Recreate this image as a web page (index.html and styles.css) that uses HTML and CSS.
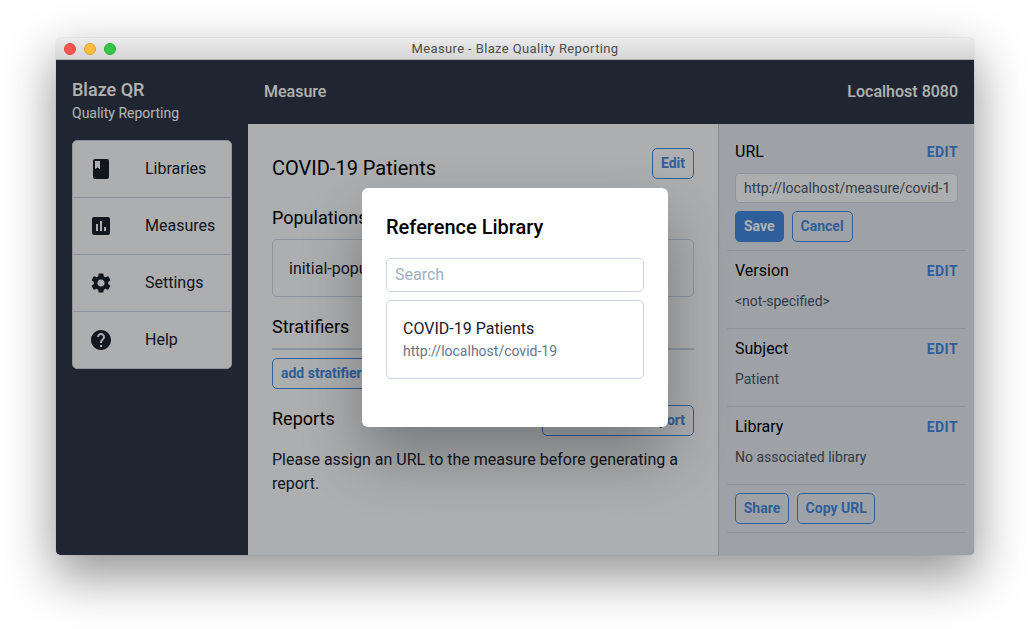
FILE: index.html
```html
<!DOCTYPE html>
<html lang="en">
<head>
<meta charset="utf-8">
<title>Measure - Blaze Quality Reporting</title>
<link rel="stylesheet" href="styles.css">
</head>
<body>
<div class="window">
  <div class="titlebar">
    <div class="lights"><span class="light red"></span><span class="light yellow"></span><span class="light green"></span></div>
    <div class="wintitle">Measure - Blaze Quality Reporting</div>
  </div>
  <div class="content">
    <nav class="sidebar">
      <div class="brand">
        <div class="brand-name">Blaze QR</div>
        <div class="brand-sub">Quality Reporting</div>
      </div>
      <ul class="menu">
        <li class="menu-item">
          <svg class="menu-icon" viewBox="0 0 24 24"><path d="M18 2H6c-1.1 0-2 .9-2 2v16c0 1.1.9 2 2 2h12c1.1 0 2-.9 2-2V4c0-1.1-.9-2-2-2zM6 4h5v8l-2.5-1.5L6 12V4z"/></svg>
          <span class="menu-label">Libraries</span>
        </li>
        <li class="menu-item">
          <svg class="menu-icon" viewBox="0 0 24 24"><path d="M19 3H5c-1.1 0-2 .9-2 2v14c0 1.1.9 2 2 2h14c1.1 0 2-.9 2-2V5c0-1.1-.9-2-2-2zM9 17H7v-7h2v7zm4 0h-2V7h2v10zm4 0h-2v-4h2v4z"/></svg>
          <span class="menu-label">Measures</span>
        </li>
        <li class="menu-item">
          <svg class="menu-icon" viewBox="0 0 24 24"><path d="M19.14 12.94c.04-.3.06-.61.06-.94 0-.32-.02-.64-.07-.94l2.03-1.58c.18-.14.23-.41.12-.61l-1.92-3.32c-.12-.22-.37-.29-.59-.22l-2.39.96c-.5-.38-1.03-.7-1.62-.94l-.36-2.54c-.04-.24-.24-.41-.48-.41h-3.84c-.24 0-.43.17-.47.41l-.36 2.54c-.59.24-1.13.57-1.62.94l-2.39-.96c-.22-.08-.47 0-.59.22L2.74 8.87c-.12.21-.08.47.12.61l2.03 1.58c-.05.3-.09.63-.09.94s.02.64.07.94l-2.03 1.58c-.18.14-.23.41-.12.61l1.92 3.32c.12.22.37.29.59.22l2.39-.96c.5.38 1.03.7 1.62.94l.36 2.54c.05.24.24.41.48.41h3.84c.24 0 .44-.17.47-.41l.36-2.54c.59-.24 1.13-.56 1.62-.94l2.39.96c.22.08.47 0 .59-.22l1.92-3.32c.12-.22.07-.47-.12-.61l-2.01-1.58zM12 15.6c-1.98 0-3.6-1.62-3.6-3.6s1.62-3.6 3.6-3.6 3.6 1.62 3.6 3.6-1.62 3.6-3.6 3.6z"/></svg>
          <span class="menu-label">Settings</span>
        </li>
        <li class="menu-item">
          <svg class="menu-icon" viewBox="0 0 24 24"><path d="M12 2C6.48 2 2 6.48 2 12s4.48 10 10 10 10-4.48 10-10S17.52 2 12 2zm1 17h-2v-2h2v2zm2.07-7.75l-.9.92C13.45 12.9 13 13.5 13 15h-2v-.5c0-1.1.45-2.1 1.17-2.83l1.24-1.26c.37-.36.59-.86.59-1.41 0-1.1-.9-2-2-2s-2 .9-2 2H8c0-2.21 1.79-4 4-4s4 1.79 4 4c0 .88-.36 1.68-.93 2.25z"/></svg>
          <span class="menu-label">Help</span>
        </li>
      </ul>
    </nav>
    <div class="page">
      <header class="topbar">
        <span>Measure</span>
        <span>Localhost 8080</span>
      </header>
      <div class="columns">
        <main class="main">
          <div class="title-row">
            <h1 class="title">COVID-19 Patients</h1>
            <button class="btn">Edit</button>
          </div>
          <h2 class="heading populations">Populations</h2>
          <div class="pop-box">initial-population</div>
          <h2 class="heading stratifiers">Stratifiers</h2>
          <button class="btn add">add stratifier</button>
          <div class="reports-row">
            <h2 class="heading">Reports</h2>
            <button class="btn generate">Generate new report</button>
          </div>
          <p class="note">Please assign an URL to the measure before generating a report.</p>
        </main>
        <aside class="aside">
          <section class="prop prop-url">
            <div class="prop-head"><span class="prop-label">URL</span><span class="edit">EDIT</span></div>
            <div class="url-input">http://localhost/measure/covid-1</div>
            <div class="btn-row"><button class="btn solid">Save</button><button class="btn">Cancel</button></div>
          </section>
          <section class="prop">
            <div class="prop-head"><span class="prop-label">Version</span><span class="edit">EDIT</span></div>
            <div class="prop-value">&lt;not-specified&gt;</div>
          </section>
          <section class="prop">
            <div class="prop-head"><span class="prop-label">Subject</span><span class="edit">EDIT</span></div>
            <div class="prop-value">Patient</div>
          </section>
          <section class="prop">
            <div class="prop-head"><span class="prop-label">Library</span><span class="edit">EDIT</span></div>
            <div class="prop-value">No associated library</div>
          </section>
          <section class="prop prop-actions">
            <div class="btn-row"><button class="btn">Share</button><button class="btn">Copy URL</button></div>
          </section>
        </aside>
      </div>
    </div>
    <div class="overlay">
      <div class="modal">
        <h3 class="modal-title">Reference Library</h3>
        <div class="search">Search</div>
        <div class="result">
          <div class="result-title">COVID-19 Patients</div>
          <div class="result-url">http://localhost/covid-19</div>
        </div>
      </div>
    </div>
  </div>
</div>
</body>
</html>
```

FILE: styles.css
```css
* { box-sizing: border-box; }
html, body { margin: 0; padding: 0; height: 100%; background: #fff; overflow: hidden; }
body { padding: 38px 0 0 56px; font-family: Roboto, "Liberation Sans", sans-serif; font-size: 16px; color: #000; }

.window {
  width: 918px;
  height: 517px;
  display: flex;
  flex-direction: column;
  border-radius: 5px;
  box-shadow: 0 20px 50px 2px rgba(0, 0, 0, .42), 0 0 1px rgba(0, 0, 0, .35);
}

.titlebar {
  height: 22px;
  flex: none;
  display: flex;
  align-items: center;
  justify-content: center;
  position: relative;
  background: linear-gradient(#ebebeb, #d5d5d5);
  border-bottom: 1px solid #b4b4b4;
  border-radius: 5px 5px 0 0;
}
.lights { position: absolute; left: 8px; top: 5px; display: flex; gap: 8px; }
.light { width: 12px; height: 12px; border-radius: 50%; }
.red { background: #fc5753; border: 1px solid #e0443e; }
.yellow { background: #fdbc40; border: 1px solid #dfa123; }
.green { background: #33c748; border: 1px solid #27aa35; }
.wintitle { font-size: 13px; letter-spacing: .38px; color: #4c4c4c; }

.content {
  flex: 1;
  min-height: 0;
  display: flex;
  position: relative;
  overflow: hidden;
  border-radius: 0 0 5px 5px;
  background: #2d3748;
}

.sidebar { width: 192px; flex: none; padding: 0 16px; background: #2d3748; }
.brand { height: 80px; padding-top: 18px; color: #fff; }
.brand-name { font-size: 18px; font-weight: 500; line-height: 24px; }
.brand-sub { font-size: 14px; line-height: 22px; }

.menu {
  list-style: none;
  margin: 0;
  padding: 0;
  background: #f7fafc;
  border: 1px solid #cbd5e0;
  border-radius: 5px;
}
.menu-item {
  height: 57px;
  display: flex;
  align-items: center;
  padding-left: 16px;
  gap: 32px;
  color: #1a202c;
  border-bottom: 1px solid #cbd5e0;
}
.menu-item:last-child { border-bottom: 0; height: 56px; }
.menu-icon { width: 24px; height: 24px; flex: none; fill: #1a202c; }
.menu-label { padding-bottom: 2px; }

.page { flex: 1; min-width: 0; display: flex; flex-direction: column; }
.topbar {
  height: 64px;
  flex: none;
  display: flex;
  align-items: center;
  justify-content: space-between;
  padding: 0 16px 2px;
  color: #fff;
  font-weight: 500;
}
.columns { flex: 1; min-height: 0; display: flex; }

.main { width: 470px; flex: none; padding: 24px; background: #f7fafc; }
.title-row { display: flex; justify-content: space-between; align-items: flex-start; height: 31px; }
.title { margin: 0; font-size: 20px; font-weight: 400; line-height: 40px; }
.heading { margin: 0; font-size: 18px; font-weight: 400; line-height: 24px; }
.populations { margin-top: 27px; }
.pop-box {
  margin-top: 9px;
  height: 58px;
  padding: 0 16px;
  display: flex;
  align-items: center;
  border: 1px solid #cbd5e0;
  border-radius: 5px;
  color: #1a202c;
}
.stratifiers { margin-top: 18px; padding-bottom: 9px; border-bottom: 2px solid #cbd5e0; }
.add { margin-top: 8px; display: block; }
.reports-row { margin-top: 16px; display: flex; justify-content: space-between; align-items: flex-start; }
.reports-row .heading { margin-top: 2px; }
.generate { height: 35px; width: 152px; padding-bottom: 0; white-space: nowrap; text-align: right; }
.note { margin: 7px 0 0; padding-top: 5px; line-height: 24px; color: #1a202c; }

.btn {
  height: 31px;
  padding: 0 8px 2px;
  font: 700 14px/1 Roboto, "Liberation Sans", sans-serif;
  color: #4488dd;
  background: transparent;
  border: 1px solid #4488dd;
  border-radius: 5px;
}
.solid { background: #4488dd; color: #fff; }

.aside { flex: 1; min-width: 0; padding: 0 8px; background: #e2e8f0; border-left: 1px solid #bcc9da; }
.prop { height: 78px; padding: 8px 8px 0; border-bottom: 1px solid #cbd5e0; }
.prop-url { height: 127px; padding-top: 16px; }
.prop-actions { height: 48px; padding-top: 8px; }
.prop-actions .btn { padding-left: 7.7px; padding-right: 7.7px; }
.prop-head { display: flex; justify-content: space-between; align-items: center; height: 24px; }
.prop-label { line-height: 24px; }
.edit { font-size: 14px; font-weight: 700; color: #4488dd; letter-spacing: .4px; }
.prop-value { margin-top: 8px; font-size: 14px; line-height: 20px; color: #4a5568; }
.url-input {
  margin-top: 9px;
  height: 30px;
  padding: 0 8px;
  line-height: 28px;
  font-size: 14px;
  color: #4a5568;
  background: #f7fafc;
  border: 1px solid #cbd5e0;
  border-radius: 5px;
  white-space: nowrap;
}
.btn-row { display: flex; gap: 8px; }
.prop-url .btn-row { margin-top: 8px; }

.overlay {
  position: absolute;
  inset: 0;
  display: flex;
  align-items: center;
  justify-content: center;
  background: rgba(0, 0, 0, .3);
}
.modal {
  width: 306px;
  height: 239px;
  padding: 24px;
  background: #fff;
  border-radius: 6px;
  box-shadow: 0 30px 60px rgba(0, 0, 0, .3);
}
.modal-title { margin: 0; font-size: 20px; font-weight: 500; line-height: 30px; color: #000; }
.search {
  margin-top: 16px;
  height: 34px;
  padding: 0 8px;
  line-height: 32px;
  color: #a0aec0;
  border: 1px solid #cbd5e0;
  border-radius: 5px;
}
.result {
  margin-top: 8px;
  height: 79px;
  padding: 17px 16px 0;
  border: 1px solid #cbd5e0;
  border-radius: 5px;
}
.result-title { line-height: 22px; color: #1a202c; }
.result-url { margin-top: 1px; font-size: 14px; line-height: 20px; color: #667590; }
```
